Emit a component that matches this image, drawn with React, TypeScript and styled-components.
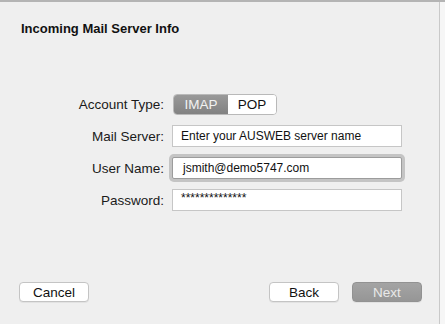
import React from "react";
import styled, { createGlobalStyle } from "styled-components";

const Global = createGlobalStyle`
  html, body { margin: 0; padding: 0; background: #f6f6f6; }
  body { font-family: "Liberation Sans", Arial, sans-serif; }
  * { box-sizing: border-box; }
`;

const Frame = styled.div`
  width: 445px;
  height: 324px;
  display: flex;
  border-top: 2px solid #b4b4b4;
  background: #f6f6f6;
`;

const Panel = styled.div`
  width: 440px;
  height: 100%;
  background: #efefef;
  border-right: 1px solid #c9c9c9;
  display: flex;
  flex-direction: column;
  padding: 19px 0 22px 0;
`;

const Title = styled.h1`
  margin: 0 0 0 21px;
  font-size: 13px;
  line-height: 16px;
  font-weight: bold;
  color: #111;
`;

const Form = styled.div`
  margin-top: 57px;
  padding-left: 20px;
  display: grid;
  grid-template-columns: 144px 230px;
  grid-template-rows: 21px 22px 22px 22px;
  column-gap: 8px;
  row-gap: 10px;
  align-items: center;
`;

const Label = styled.label`
  text-align: right;
  font-size: 13.5px;
  color: #1a1a1a;
`;

const Segmented = styled.div`
  display: flex;
  height: 21px;
  width: 104px;
  margin-left: 1px;
  border: 1px solid #b9b9b9;
  border-radius: 4px;
  overflow: hidden;
  background: #fff;
`;

const Segment = styled.div<{ $active?: boolean }>`
  flex: ${(p) => (p.$active ? "0 0 54px" : "1")};
  display: flex;
  align-items: center;
  justify-content: center;
  font-size: 13.5px;
  color: ${(p) => (p.$active ? "#f2f2f2" : "#111")};
  background: ${(p) =>
    p.$active ? "linear-gradient(#999999, #828282)" : "#ffffff"};
`;

const Input = styled.div<{ $focused?: boolean }>`
  height: 22px;
  display: flex;
  align-items: center;
  padding-left: ${(p) => (p.$focused ? "10px" : "8px")};
  font-size: 12px;
  color: #111;
  background: #fff;
  border: 1px solid ${(p) => (p.$focused ? "#9c9c9c" : "#c6c6c6")};
  border-radius: ${(p) => (p.$focused ? "2px" : "0")};
  box-shadow: ${(p) =>
    p.$focused ? "0 0 0 3px rgba(160,160,160,0.55)" : "none"};
`;

const Stars = styled.span`
  font-size: 12px;
  position: relative;
  top: -2px;
`;

const Footer = styled.div`
  margin-top: auto;
  display: flex;
  padding: 0 17px 0 19px;
  align-items: center;
`;

const Spacer = styled.div`
  flex: 1;
`;

const Button = styled.button<{ $disabled?: boolean }>`
  width: 70px;
  height: 20px;
  padding: 0;
  font-family: "Liberation Sans", Arial, sans-serif;
  font-size: 13.5px;
  border-radius: 4px;
  border: 1px solid ${(p) => (p.$disabled ? "#929292" : "#c4c4c4")};
  background: ${(p) =>
    p.$disabled ? "linear-gradient(#a4a4a4, #969696)" : "#ffffff"};
  color: ${(p) => (p.$disabled ? "#e9e9e9" : "#111")};
  box-shadow: 0 1px 0 rgba(0, 0, 0, 0.05);
`;

const ButtonGroup = styled.div`
  display: flex;
  gap: 13px;
`;

export default function App() {
  return (
    <>
      <Global />
      <Frame>
        <Panel>
          <Title>Incoming Mail Server Info</Title>
          <Form>
            <Label>Account Type:</Label>
            <Segmented>
              <Segment $active>IMAP</Segment>
              <Segment>POP</Segment>
            </Segmented>
            <Label>Mail Server:</Label>
            <Input>Enter your AUSWEB server name</Input>
            <Label>User Name:</Label>
            <Input $focused>jsmith@demo5747.com</Input>
            <Label>Password:</Label>
            <Input>
              <Stars>**************</Stars>
            </Input>
          </Form>
          <Footer>
            <Button>Cancel</Button>
            <Spacer />
            <ButtonGroup>
              <Button>Back</Button>
              <Button $disabled>Next</Button>
            </ButtonGroup>
          </Footer>
        </Panel>
      </Frame>
    </>
  );
}
